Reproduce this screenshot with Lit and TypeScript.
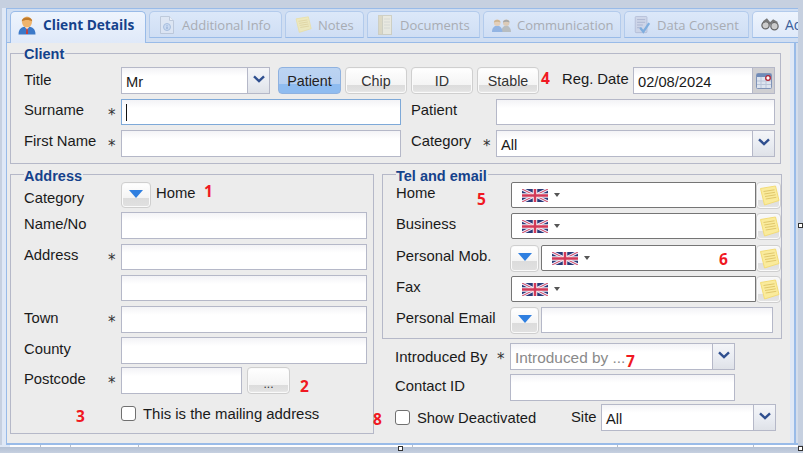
import { LitElement, html, css } from "lit";
import { customElement } from "lit/decorators.js";

const flag = html`<svg class="flag" viewBox="0 0 26 13" width="26" height="13">
  <rect width="26" height="13" fill="#2a3a78"/>
  <path d="M0 0L26 13M26 0L0 13" stroke="#eef" stroke-width="3"/>
  <path d="M0 0L26 13M26 0L0 13" stroke="#d0405a" stroke-width="1"/>
  <path d="M13 0V13M0 6.5H26" stroke="#f4eaf0" stroke-width="4.5"/>
  <path d="M13 0V13M0 6.5H26" stroke="#d23a58" stroke-width="2.4"/>
</svg>`;

const noteIcon = (s = 22) => html`<svg viewBox="0 0 22 22" width=${s} height=${s}>
  <path d="M2.500 3.500L17.500 1L21 15.500L6.500 20Z" fill="#faeb9c" stroke="#f3dc78" stroke-width="1"/>
  <path d="M5.500 6.500L16.500 4.800M6.300 9L17 7.300M7 11.500L17.700 9.800M7.700 14L18.300 12.300" stroke="#e0c76c" stroke-width="1"/>
</svg>`;

const personIcon = html`<svg viewBox="0 0 20 20" width="20" height="20">
  <path d="M1.5 19.5C1.5 14 4.5 11.5 10 11.5S18.500 14 18.500 19.500Z" fill="#3c79c8"/>
  <path d="M8 12L10 15L12 12Z" fill="#fff"/><path d="M9.300 13.500H10.700L11 19H9Z" fill="#d43a2f"/>
  <ellipse cx="10" cy="7" rx="5" ry="5.500" fill="#f0b46c"/>
  <path d="M4.800 6.500C4.500 1.500 15.500 1 15.200 6.500C13 4.500 7 4.500 4.800 6.500Z" fill="#c07a2a"/>
</svg>`;

const infoIcon = html`<svg viewBox="0 0 18 20" width="18" height="20">
  <path d="M2.500 1.500H11.500L15.500 5.500V18.500H2.500Z" fill="#e2e8f2" stroke="#aeb9ca"/>
  <path d="M11.500 1.500V5.500H15.500" fill="#f5f7fb" stroke="#aeb9ca"/>
  <circle cx="9" cy="12" r="3.500" fill="#c4d6ee" stroke="#8ba8d0"/>
  <path d="M9 10.200V10.900M9 11.600V14" stroke="#5a80b8"/>
</svg>`;

const docIcon = html`<svg viewBox="0 0 18 22" width="18" height="22">
  <rect x="2.500" y="1.500" width="13" height="19" fill="#f3ecd2" stroke="#c9c3a6"/>
  <rect x="2.500" y="1.500" width="4" height="19" fill="#dfd2a8" stroke="#c9c3a6"/>
  <path d="M8 5H14M8 8H14M8 11H14M8 14H14" stroke="#d6d2c0"/>
</svg>`;

const peopleIcon = html`<svg viewBox="0 0 22 18" width="19" height="16">
  <path d="M11 17C11 12 13.500 10 16.500 10S22 12 22 17Z" fill="#a8a8a0"/>
  <circle cx="16.500" cy="6.500" r="3.800" fill="#e0bd92"/>
  <path d="M12.700 6C12.700 2 20.300 2 20.300 6C18 4.800 15 4.800 12.700 6Z" fill="#8a8478"/>
  <path d="M0 17C0 12 3 10 6 10S12 12 12 17Z" fill="#6c9ad8"/>
  <circle cx="6" cy="6.500" r="3.800" fill="#edc394"/>
  <path d="M2.200 6C2.200 2 9.800 2 9.800 6C7.500 4.800 4.500 4.800 2.200 6Z" fill="#c99a58"/>
</svg>`;

const consentIcon = html`<svg viewBox="0 0 20 22" width="18" height="20">
  <rect x="2.500" y="1.500" width="13" height="18" rx="1" fill="#c8cde0" stroke="#9ea6c4"/>
  <path d="M4.500 5H13.500M4.500 8H13.500M4.500 11H11M4.500 14H9" stroke="#8d96b8"/>
  <path d="M8 14L11.500 18.500L18 9" fill="none" stroke="#4d8fd0" stroke-width="2.500"/>
</svg>`;

const binoIcon = html`<svg viewBox="0 0 22 16" width="18" height="13">
  <circle cx="5.500" cy="9" r="4.500" fill="#ccc" stroke="#666" stroke-width="1.500"/>
  <circle cx="16.500" cy="10" r="4.500" fill="#ccc" stroke="#666" stroke-width="1.500"/>
  <path d="M3 5L7 2L11 7L15 3L20 6" fill="none" stroke="#777" stroke-width="2.500"/>
</svg>`;

const calendarIcon = html`<svg viewBox="0 0 16 16" width="16" height="16">
  <rect x="0.500" y="0.500" width="15" height="15" rx="1" fill="#dde4ef" stroke="#7f93b8"/>
  <rect x="1" y="1" width="14" height="3" fill="#6f8bb8"/>
  <path d="M1 8H15M1 11.500H15M5 4V15M10 4V15" stroke="#b9c4d8"/>
  <circle cx="12" cy="5" r="2.300" fill="#fff" stroke="#b02030" stroke-width="1.300"/>
</svg>`;

const chevron = html`<svg viewBox="0 0 12 8" width="12" height="8">
  <path d="M1 1.300L6 6L11 1.300" fill="none" stroke="#2f4f8f" stroke-width="2.400"/>
</svg>`;

const tabs = [
  { label: "Client Details", icon: personIcon, cls: "active", w: 136 },
  { label: "Additional Info", icon: infoIcon, cls: "", w: 133 },
  { label: "Notes", icon: noteIcon(18), cls: "", w: 79 },
  { label: "Documents", icon: docIcon, cls: "", w: 113 },
  { label: "Communication", icon: peopleIcon, cls: "", w: 138 },
  { label: "Data Consent", icon: consentIcon, cls: "", w: 125 },
  { label: "Ad", icon: binoIcon, cls: "next", w: 60 },
];

const marks = [
  ["1", 204, 182], ["2", 300, 377], ["3", 76, 407], ["4", 541, 69],
  ["5", 477, 190], ["6", 719, 250], ["7", 626, 352], ["8", 373, 410],
];

const handles = [[398, 446], [798, 446], [798, 223]];
const ticks = [30, 60, 128, 402, 607, 743];

@customElement("app-root")
export class AppRoot extends LitElement {
  static styles = css`
    :host { display: block; position: relative; width: 803px; height: 453px; overflow: hidden;
      background: #c6d0e0; font: 14.800px "Liberation Sans", Arial, sans-serif; color: #1a1a1a; padding-top: 8px; }
    :host, * { box-sizing: border-box; }
    .window { margin: 0 5px 0 2px; height: 437px; background: #dfe8f6; padding-left: 4px; display: flex; flex-direction: column; }
    .panel { flex: 1; display: flex; flex-direction: column; min-height: 0; border: 1px solid #99bbe8; border-width: 1px 0 2px 1px; overflow: hidden; background: #dfe8f6; }
    .tabbar { height: 34px; flex: none; display: flex; gap: 3px; padding: 2px 0 0 3px; background: #d0def2; border-bottom: 1px solid #99bbe8; }
    .tab { flex: none; height: 27px; border: 1px solid #b3cbec; border-bottom: 1px solid #99bbe8; border-radius: 5px 5px 0 0;
      background: linear-gradient(#dce8f9, #cfdef4); display: flex; align-items: center; gap: 6px; padding-left: 8px;
      font: 13px "Open Sans", sans-serif; color: #a8acb3; white-space: nowrap; }
    .tab svg { flex: none; opacity: .62; }
    .tab.active { height: 32px; border-color: #99bbe8; border-bottom: none; background: linear-gradient(#eef4fd, #dfe9f9);
      color: #15428b; font-weight: 700; font-size: 13.700px; padding: 0 0 6px 6px; gap: 6px; }
    .tab.active svg, .tab.next svg { opacity: 1; }
    .tab.next { background: linear-gradient(#eef4fd, #dfe9f9); color: #3c5f9c; font-size: 14px; }
    .main { flex: 1; display: flex; min-height: 0; }
    .content { flex: 1; min-width: 0; background: #ececec; padding: 0 9px 0 3px; display: flex; flex-direction: column; }
    .rail { flex: none; width: 8px; background: linear-gradient(to right, #dfe8f6 0 4px, #99bbe8 4px 6px, #d4ddeb 6px); }
    fieldset { margin: 0; padding: 0; border: 1px solid #b5b8c8; min-width: 0; }
    legend { margin: 0; padding: 4px 1px 0 0; font: 700 14.500px/18px "Liberation Sans", Arial, sans-serif; color: #15428b; }
    .client legend { padding-top: 2px; }
    .client { height: 121px; padding: 4px 5px 0 13px; flex: none; }
    .lower { display: flex; gap: 8px; margin-top: -1px; }
    .address { width: 364px; height: 271px; padding: 0 5px 0 13px; flex: none; }
    .right { width: 400px; flex: none; }
    .tel { height: 176px; padding: 0 0 0 13px; flex: none; }
    .stack { display: flex; flex-direction: column; }
    .row { display: flex; align-items: flex-start; flex: none; }
    .client .r1 { height: 27px; margin-top: 0; }
    .client .r2 { height: 26px; margin-top: 5px; }
    .client .r3 { height: 27px; margin-top: 5px; }
    .lab { display: block; white-space: nowrap; width: 84px; padding-top: 2px; line-height: 18px; flex: none; }
    .lab.lo { padding-top: 3px; }
    .lab.title { width: 97px; padding-top: 4px; }
    .lab.reg { width: 71px; margin-left: 23px; padding-top: 3px; }
    .lab.cat { width: 97px; padding-top: 7px; }
    .lab.intro { width: 102px; padding-top: 5px; font-size: 15px; }
    .lab.contact { width: 115px; padding-top: 3px; }
    .lab.site { width: 30px; padding: 0 0 2px; }
    .lab.side { margin-left: 10px; }
    .star { width: 13px; text-align: left; padding-top: 9px; line-height: 14px; font-size: 15px; color: #333; font-family: "DejaVu Sans", sans-serif; flex: none; }
    .sp { width: 13px; flex: none; }
    .in { height: 100%; background: linear-gradient(#f3f3f6, #fff 8px); border: 1px solid #b5b8c8; display: flex; align-items: center; padding: 3px 0 0 4px;
      font-size: 14.700px; white-space: nowrap; overflow: hidden; flex: none; }
    .in.focus { border-color: #7ea9d8; }
    .caret { width: 1px; height: 17px; background: #111; margin: -3px 0 0 0; }
    .in.placeholder { color: #8a8a8a; font-size: 15.400px; }
    .combo { display: flex; height: 100%; flex: none; }
    .combo .in { flex: 1; border-right: none; min-width: 0; }
    .trig { flex: none; width: 23px; border: 1px solid #b5b8c8; background: linear-gradient(#f4f5f8, #e9ecf2 55%, #dfe2e8); display: flex; align-items: center; justify-content: center; padding-bottom: 3px; }
    .trig.cal { background: #cfcfd2; padding: 0; }
    .btn { flex: none; height: 100%; border: 1px solid #cfcfcf; border-radius: 4px; background: linear-gradient(#fff 0, #f4f4f4 68%, #dcdcdc 68%, #e2e2e2 92%, #f2f2f2 100%);
      font: 14.300px "Liberation Sans", Arial, sans-serif; color: #333; display: flex; align-items: center; justify-content: center; padding: 0; box-shadow: inset 0 0 0 1px #fafafa; }
    .btn.on { background: linear-gradient(#bcd4f2 0, #b6cff0 64%, #8fbcf0 64%, #8fbcf0 100%); border-color: #8fb2e0; color: #222; box-shadow: none; }
    .btn.next { margin-left: 4px; width: 62px; }
    .btn.dots { width: 43px; margin-left: 5px; font-size: 12px; padding-top: 6px; }
    .btn.drop { background: linear-gradient(#fff 0, #f4f4f4 62%, #dcdcdc 62%, #e0e0e0 94%, #f2f2f2 100%); width: 29px; height: 27px; }
    .arrow { width: 0; height: 0; border: 7px solid transparent; border-top: 8px solid #2f7fe0; border-bottom: 0; margin-top: -3px; }
    .tel-row { height: 26px; flex: none; display: flex; }
    .phone { flex: 1; border: 1px solid #757575; border-radius: 2px 0 0 2px; background: #fff; display: flex; align-items: center; padding-left: 10px; gap: 6px; min-width: 0; }
    .phone .tri { width: 0; height: 0; border: 3px solid transparent; border-top: 4px solid #555; border-bottom: 0; }
    .flag { filter: blur(.5px); }
    .note { width: 25px; flex: none; height: 27px; padding: 0; background: linear-gradient(#f7f7f7 0, #f4f4f4 70%, #dedede 70%, #e4e4e4 100%); }
    .check { width: 15px; height: 15px; border: 1px solid #707070; border-radius: 3px; background: #fff; flex: none; }
    .mail { margin-top: 11px; padding-left: 97px; height: 18px; align-items: center; }
    .mail .check { margin-top: -2px; }
    .mail .txt { margin-left: 7px; font-size: 14.900px; }
    .plain { height: 27px; padding-left: 13px; }
    .plain.mt4 { margin-top: 4px; }
    .plain.mt3 { margin-top: 3px; align-items: center; }
    .deact { margin-left: 7px; width: 154px; }
    .w2 { width: 2px; flex: none; }
    .w8 { width: 8px; flex: none; }
    .home { margin-left: 5px; padding-top: 3px; }
    .foot { height: 8px; position: relative; background: linear-gradient(#aebbd0, #c6d0e0); }
    .strip { margin-left: 10px; margin-right: 5px; height: 2px; background: #fdfdfe; position: relative; }
    .strip .t { position: absolute; top: 0; width: 1px; height: 2px; background: #b9bfca; }
    .corner { position: absolute; left: 0; top: 0; width: 10px; height: 2px; background: #dfe8f6; }
    .m { position: absolute; font: 700 15.500px/18px "Open Sans", sans-serif; color: #f01822; }
    .h { position: absolute; width: 5px; height: 5px; background: #fff; border: 1px solid #333; }
  `;

  private combo(w: number, value: string, ph = false) {
    return html`<div class="combo" style="width:${w}px">
      <div class="in ${ph ? "placeholder" : ""}">${value}</div>
      <div class="trig">${chevron}</div></div>`;
  }

  private input(w: number, focus = false) {
    return html`<div class="in ${focus ? "focus" : ""}" style="width:${w}px">${focus ? html`<span class="caret"></span>` : ""}</div>`;
  }

  private addr(label: string, star: boolean, h: number, gap: number, body: unknown, lo = true) {
    return html`<div class="row" style="height:${h}px;margin-top:${gap}px">
      <div class="lab ${lo ? "lo" : ""}">${label}</div>${star ? html`<div class="star">*</div>` : html`<div class="sp"></div>`}${body}</div>`;
  }

  private tel(label: string, top: number, drop: boolean) {
    return html`<div class="tel-row" style="margin-top:${top}px">
      <div class="lab" style="width:${drop ? 114 : 115}px">${label}</div>
      ${drop ? html`<div class="btn drop"><span class="arrow"></span></div><div class="w2"></div>` : ""}
      <div class="phone">${flag}<span class="tri"></span></div>
      <div class="btn note">${noteIcon(22)}</div>
    </div>`;
  }

  render() {
    return html`
      <div class="window"><div class="panel">
        <div class="tabbar">
          ${tabs.map((t) => html`<div class="tab ${t.cls}" style="width:${t.w}px">${t.icon}<span>${t.label}</span></div>`)}
        </div>
        <div class="main">
        <div class="content">
          <fieldset class="client stack">
            <legend>Client</legend>
            <div class="row r1">
              <div class="lab title">Title</div>
              ${this.combo(149, "Mr")}
              <div class="w8"></div>
              <div class="btn on" style="width:63px">Patient</div>
              <div class="btn next">Chip</div>
              <div class="btn next">ID</div>
              <div class="btn next">Stable</div>
              <div class="lab reg">Reg. Date</div>
              <div class="combo" style="width:142px">
                <div class="in">02/08/2024</div>
                <div class="trig cal">${calendarIcon}</div>
              </div>
            </div>
            <div class="row r2">
              <div class="lab">Surname</div><div class="star">*</div>${this.input(280, true)}
              <div class="lab side" style="width:85px">Patient</div>${this.input(279)}
            </div>
            <div class="row r3">
              <div class="lab">First Name</div><div class="star">*</div>${this.input(280)}
              <div class="lab side" style="width:72px">Category</div><div class="star">*</div>${this.combo(279, "All")}
            </div>
          </fieldset>
          <div class="lower">
            <fieldset class="address stack">
              <legend>Address</legend>
              <div class="row" style="height:26px;margin-top:-3px">
                <div class="lab cat">Category</div>
                <div class="btn drop" style="width:30px;height:26px"><span class="arrow"></span></div>
                <div class="home">Home</div>
              </div>
              ${this.addr("Name/No", false, 27, 4, this.input(246))}
              ${this.addr("Address", true, 26, 5, this.input(246), false)}
              ${this.addr("", false, 26, 5, this.input(246))}
              ${this.addr("Town", true, 27, 5, this.input(246))}
              ${this.addr("County", false, 27, 4, this.input(246))}
              ${this.addr("Postcode", true, 27, 3, html`${this.input(121)}<div class="btn dots">...</div>`)}
              <div class="row mail">
                <span class="check"></span><span class="txt">This is the mailing address</span>
              </div>
            </fieldset>
            <div class="right stack">
              <fieldset class="tel stack">
                <legend>Tel and email</legend>
                ${this.tel("Home", -3, false)}
                ${this.tel("Business", 5, false)}
                ${this.tel("Personal Mob.", 6, true)}
                ${this.tel("Fax", 5, false)}
                <div class="row" style="height:26px;margin-top:5px">
                  <div class="lab" style="width:114px">Personal Email</div>
                  <div class="btn drop"><span class="arrow"></span></div>
                  <div class="w2"></div>
                  ${this.input(232)}
                </div>
              </fieldset>
              <div class="row plain mt4">
                <div class="lab intro">Introduced By</div><div class="star">*</div>
                ${this.combo(225, "Introduced by ...", true)}
              </div>
              <div class="row plain mt4">
                <div class="lab contact">Contact ID</div>${this.input(225)}
              </div>
              <div class="row plain mt3">
                <span class="check"></span><span class="deact">Show Deactivated</span>
                <div class="lab site">Site</div>
                ${this.combo(175, "All")}
              </div>
            </div>
          </div>
        </div>
        <div class="rail"></div>
        </div>
      </div></div>
      <div class="foot">
        <div class="corner"></div>
        <div class="strip">${ticks.map((x) => html`<span class="t" style="left:${x}px"></span>`)}</div>
      </div>
      ${marks.map(([t, x, y]) => html`<div class="m" style="left:${x}px;top:${y}px">${t}</div>`)}
      ${handles.map(([x, y]) => html`<div class="h" style="left:${x}px;top:${y}px"></div>`)}
    `;
  }
}
